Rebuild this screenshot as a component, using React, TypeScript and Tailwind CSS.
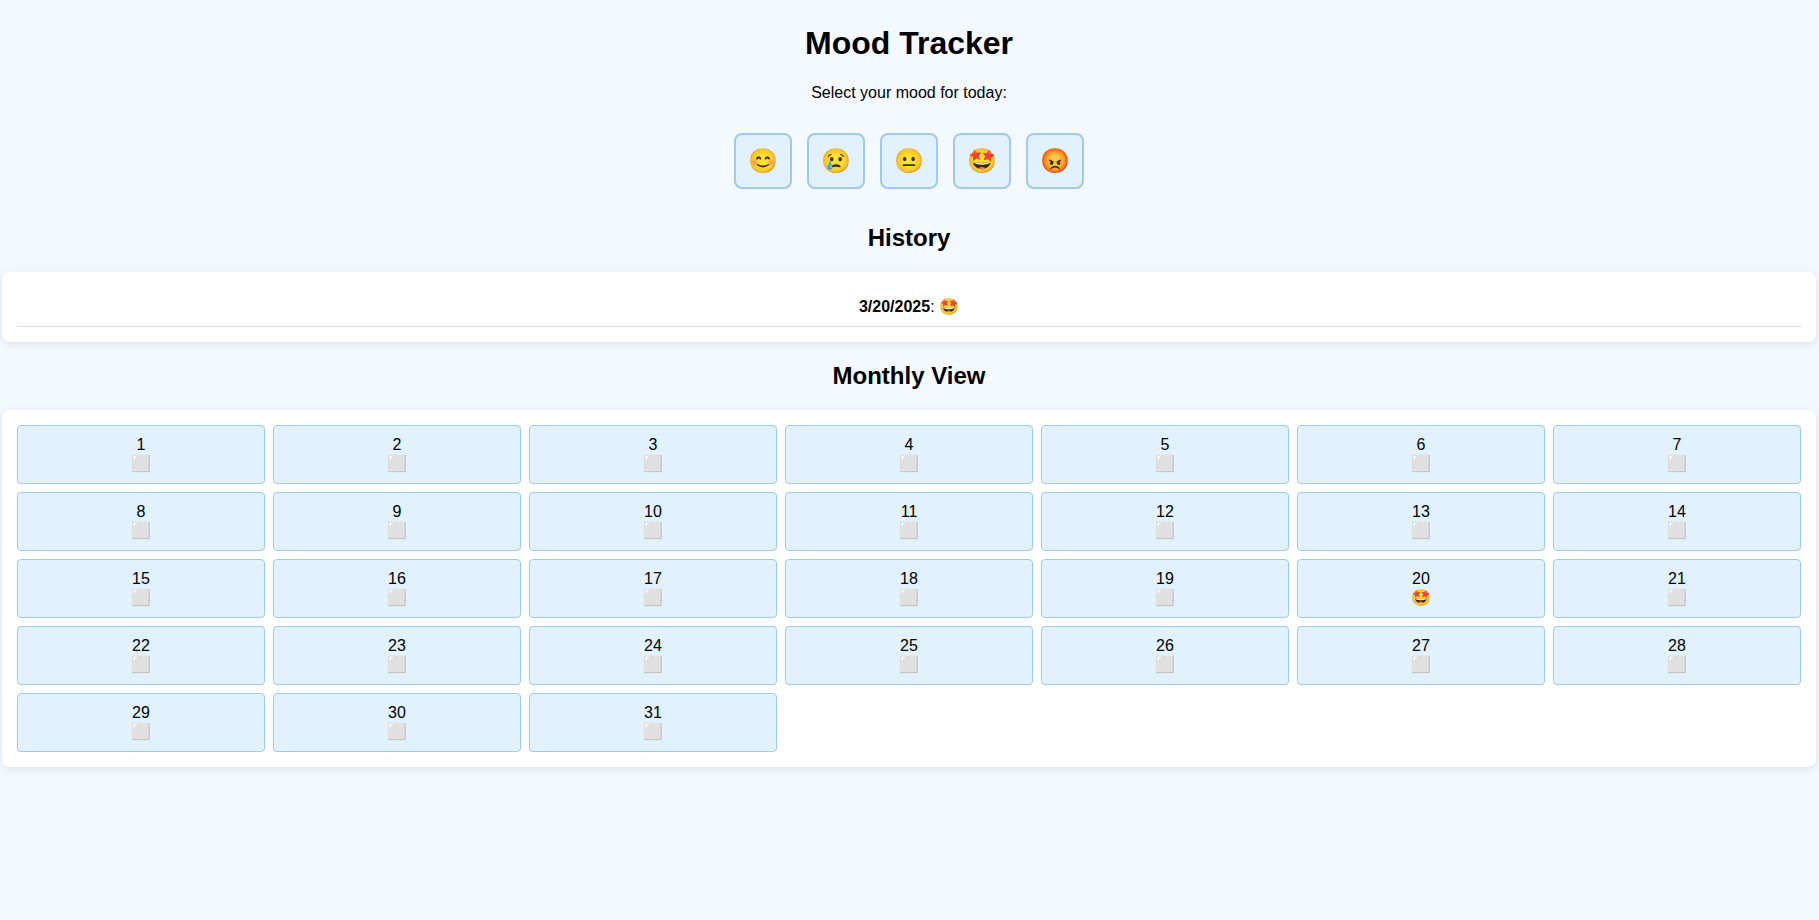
const MOODS = [
  { emoji: "😊", label: "Happy" },
  { emoji: "😢", label: "Sad" },
  { emoji: "😐", label: "Neutral" },
  { emoji: "🤩", label: "Excited" },
  { emoji: "😡", label: "Angry" },
];

const HISTORY = [{ date: "3/20/2025", day: 20, mood: "🤩" }];

const DAYS = Array.from({ length: 31 }, (_, i) => i + 1);

function moodFor(day: number) {
  return HISTORY.find((entry) => entry.day === day)?.mood ?? "⬜";
}

export default function App() {
  return (
    <main className="min-h-screen bg-[#f4f9ff] pt-[25px] pr-[3px] pl-[2px] text-center font-['Liberation_Sans',Arial,sans-serif] text-base leading-[18px] text-black">
      <h1 className="text-[32px] leading-9 font-bold">Mood Tracker</h1>
      <p className="mt-[23px]">Select your mood for today:</p>

      <div className="mt-[31px] flex justify-center gap-[15px]">
        {MOODS.map((mood) => (
          <button
            key={mood.label}
            aria-label={mood.label}
            className="rounded-lg border-2 border-[#a0c8f3] bg-[#e1f1fe] px-3 py-3 text-[24px] leading-7"
          >
            {mood.emoji}
          </button>
        ))}
      </div>

      <h2 className="mt-[35px] text-2xl leading-7 font-bold">History</h2>
      <ul className="mt-5 rounded-lg bg-white p-[15px] shadow-[0_2px_8px_rgba(0,0,0,0.1)]">
        {HISTORY.map((entry) => (
          <li key={entry.date} className="border-b border-[#dddddd] py-[10px] leading-[19px]">
            <strong>{entry.date}</strong>: {entry.mood}
          </li>
        ))}
      </ul>

      <h2 className="mt-5 text-2xl leading-7 font-bold">Monthly View</h2>
      <div className="mt-5 grid grid-cols-7 gap-2 rounded-lg bg-white p-[15px] shadow-[0_2px_8px_rgba(0,0,0,0.1)]">
        {DAYS.map((day) => (
          <div key={day} className="rounded border border-[#a0c8f3] bg-[#e1f1fe] py-[10px]">
            <span className="block leading-[18px]">{day}</span>
            <span className="block leading-[19px]">{moodFor(day)}</span>
          </div>
        ))}
      </div>
    </main>
  );
}
